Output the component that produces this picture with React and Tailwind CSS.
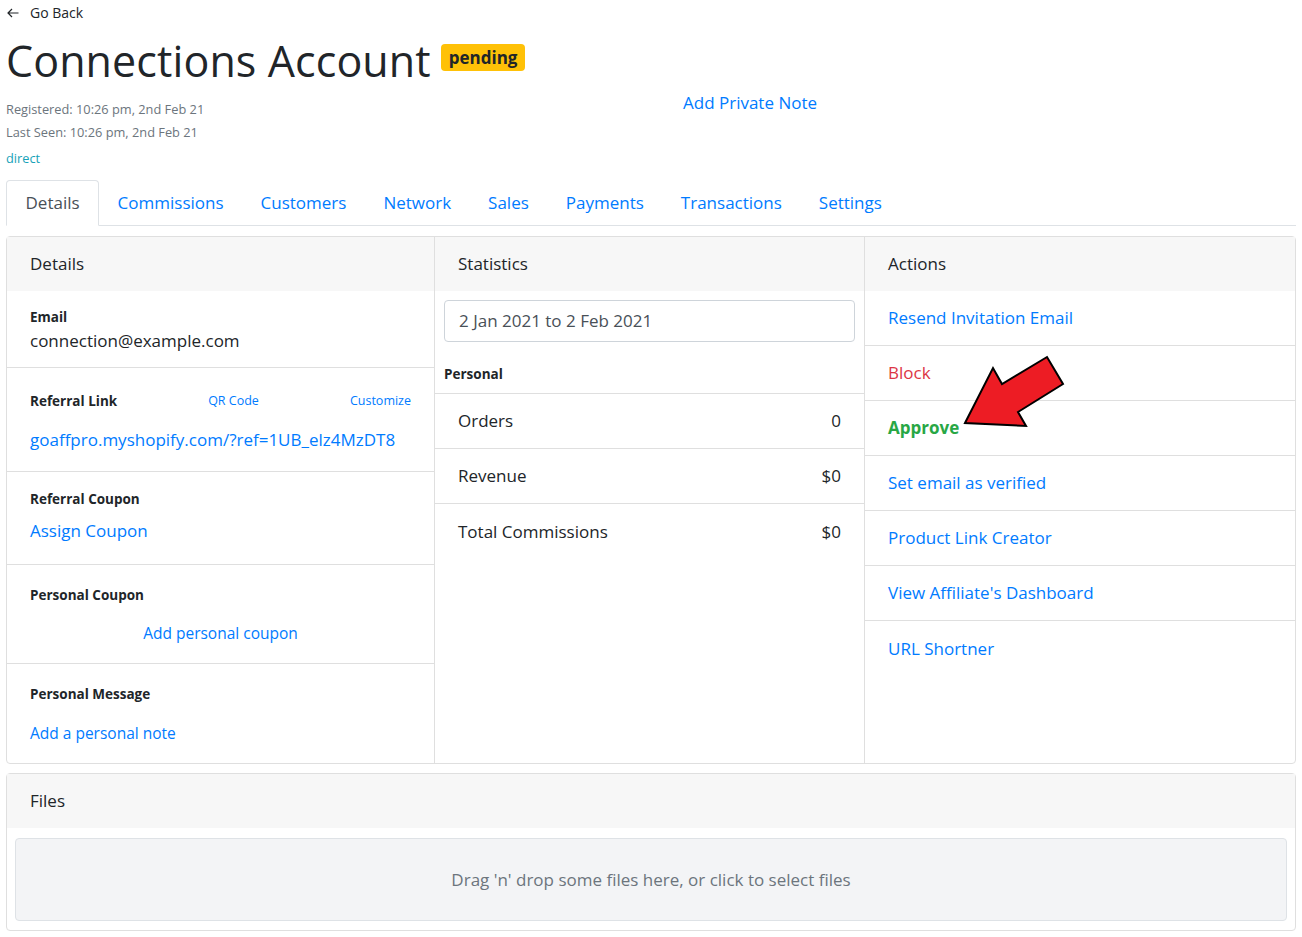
import React from "react";

const F = { fontFamily: '"Open Sans", "Noto Sans", Arial, sans-serif' };

function Arrow() {
  return (
    <svg className="absolute left-[958px] top-[352px] pointer-events-none" width="112" height="82" viewBox="958 352 112 82">
      <polygon
        points="965,423 993,368 1002,384 1047,357 1063,384 1018,412 1026,426"
        fill="#ed1c24"
        stroke="#000"
        strokeWidth="2"
        strokeLinejoin="miter"
      />
    </svg>
  );
}

function DetailRow({ children, className = "" }) {
  return <div className={"shrink-0 border-b border-[#dfdfdf] px-[23px] " + className}>{children}</div>;
}

export default function App() {
  const tabs = ["Details", "Commissions", "Customers", "Network", "Sales", "Payments", "Transactions", "Settings"];
  const actions = [
    { t: "Resend Invitation Email", c: "text-[#007bff]" },
    { t: "Block", c: "text-[#dc3545]" },
    { t: "Approve", c: "text-[#28a745] font-bold" },
    { t: "Set email as verified", c: "text-[#007bff]" },
    { t: "Product Link Creator", c: "text-[#007bff]" },
    { t: "View Affiliate's Dashboard", c: "text-[#007bff]" },
    { t: "URL Shortner", c: "text-[#007bff]" },
  ];
  return (
    <div className="relative min-h-[937px] bg-white px-[6px] text-[#212529]" style={F}>
      {/* Go back */}
      <div className="flex h-[25px] items-center gap-[11px] pl-[1px] text-[14px] text-[#212529]">
        <svg width="12" height="10" viewBox="0 0 12 10" fill="none" stroke="#212529" strokeWidth="1.2">
          <path d="M11.5 5H1M5 1L1 5l4 4" />
        </svg>
        <span>Go Back</span>
      </div>

      {/* Title */}
      <div className="mt-[12px] flex items-start">
        <h1 className="h-[48px] text-[43px] leading-[48px] font-normal tracking-[0.1px]">Connections Account</h1>
        <span className="ml-[10px] mt-[7px] rounded-[4px] bg-[#ffc107] px-[8px] text-[17px] leading-[27px] font-bold text-[#212529]">
          pending
        </span>
      </div>

      <div className="mt-[13px] flex">
        <div className="w-[645px]">
          <div className="text-[12.8px] leading-[23px] text-[#6c757d]">Registered: 10:26 pm, 2nd Feb 21</div>
          <div className="text-[12.8px] leading-[23px] text-[#6c757d]">Last Seen: 10:26 pm, 2nd Feb 21</div>
          <div className="mt-[3px] text-[12.8px] leading-[23px] text-[#17a2b8]">direct</div>
        </div>
        <div className="-mt-[9px] pl-[32px] text-[17px] leading-[27px] text-[#007bff]">Add Private Note</div>
      </div>

      {/* Tabs */}
      <div className="mt-[10px] flex h-[46px] border-b border-[#dee2e6]">
        {tabs.map((t, i) => (
          <div
            key={t}
            className={
              "flex h-[46px] items-center px-[18.5px] text-[17px] " +
              (i === 0
                ? "rounded-t-[4px] border border-b-white border-[#dee2e6] bg-white text-[#495057]"
                : "text-[#007bff]")
            }
          >
            {t}
          </div>
        ))}
      </div>

      {/* Card group */}
      <div className="mt-[10px] flex h-[528px] rounded-[4px] border border-[#dfdfdf]">
        {/* Details */}
        <div className="flex w-[428px] flex-col border-r border-[#dfdfdf]">
          <div className="flex h-[54px] shrink-0 items-center bg-[#f7f7f7] px-[23px] text-[17px]">Details</div>
          <DetailRow className="pt-[16px] pb-[13px]">
            <div className="text-[13.5px] leading-[20px] font-bold">Email</div>
            <div className="text-[17px] leading-[27px]">connection@example.com</div>
          </DetailRow>
          <DetailRow className="pt-[18px] pb-[18px]">
            <div className="flex h-[31px] items-center justify-between">
              <span className="text-[13.5px] font-bold">Referral Link</span>
              <span className="text-[12.5px] text-[#007bff]">QR Code</span>
              <span className="text-[12.5px] text-[#007bff]">Customize</span>
            </div>
            <div className="mt-[9px] whitespace-nowrap text-[17px] leading-[27px] text-[#007bff]">goaffpro.myshopify.com/?ref=1UB_elz4MzDT8</div>
          </DetailRow>
          <DetailRow className="pt-[17px] pb-[20px]">
            <div className="text-[13.5px] leading-[20px] font-bold">Referral Coupon</div>
            <div className="mt-[8px] text-[17px] leading-[27px] text-[#007bff]">Assign Coupon</div>
          </DetailRow>
          <DetailRow className="pt-[20px] pb-[18px]">
            <div className="text-[13.5px] leading-[20px] font-bold">Personal Coupon</div>
            <div className="mt-[16px] text-center text-[15.5px] leading-[24px] text-[#007bff]">Add personal coupon</div>
          </DetailRow>
          <div className="px-[23px] pt-[20px]">
            <div className="text-[13.5px] leading-[20px] font-bold">Personal Message</div>
            <div className="mt-[17px] text-[15.5px] leading-[24px] text-[#007bff]">Add a personal note</div>
          </div>
        </div>

        {/* Statistics */}
        <div className="flex w-[430px] flex-col border-r border-[#dfdfdf]">
          <div className="flex h-[54px] shrink-0 items-center bg-[#f7f7f7] px-[23px] text-[17px]">Statistics</div>
          <div className="px-[9px] pt-[9px]">
            <div className="flex h-[42px] items-center rounded-[4px] border border-[#ced4da] px-[14px] text-[17px] text-[#495057]">
              2 Jan 2021 to 2 Feb 2021
            </div>
            <div className="mt-[22px] mb-[9px] text-[13.5px] leading-[20px] font-bold">Personal</div>
          </div>
          {[
            ["Orders", "0"],
            ["Revenue", "$0"],
            ["Total Commissions", "$0"],
          ].map(([k, v], i) => (
            <div
              key={k}
              className={
                "flex h-[55px] shrink-0 items-center justify-between border-t border-[#dfdfdf] px-[23px] text-[17px] " +
                (i === 2 ? "pt-[2px]" : "")
              }
            >
              <span>{k}</span>
              <span>{v}</span>
            </div>
          ))}
        </div>

        {/* Actions */}
        <div className="flex flex-1 flex-col">
          <div className="flex h-[54px] shrink-0 items-center bg-[#f7f7f7] px-[23px] text-[17px]">Actions</div>
          {actions.map((a, i) => (
            <div
              key={a.t}
              className={
                "flex h-[55px] shrink-0 items-center px-[23px] text-[17px] " +
                (i < actions.length - 1 ? "border-b border-[#dfdfdf] " : "") +
                a.c
              }
            >
              {a.t}
            </div>
          ))}
        </div>
      </div>

      {/* Files */}
      <div className="mt-[9px] rounded-[4px] border border-[#dfdfdf]">
        <div className="flex h-[54px] items-center bg-[#f7f7f7] px-[23px] text-[17px]">Files</div>
        <div className="px-[8px] pt-[10px] pb-[9px]">
          <div className="flex h-[83px] items-center justify-center rounded-[4px] border border-[#dee2e6] bg-[#f3f4f6] text-[17px] text-[#6c757d]">
            Drag 'n' drop some files here, or click to select files
          </div>
        </div>
      </div>

      <Arrow />
    </div>
  );
}
